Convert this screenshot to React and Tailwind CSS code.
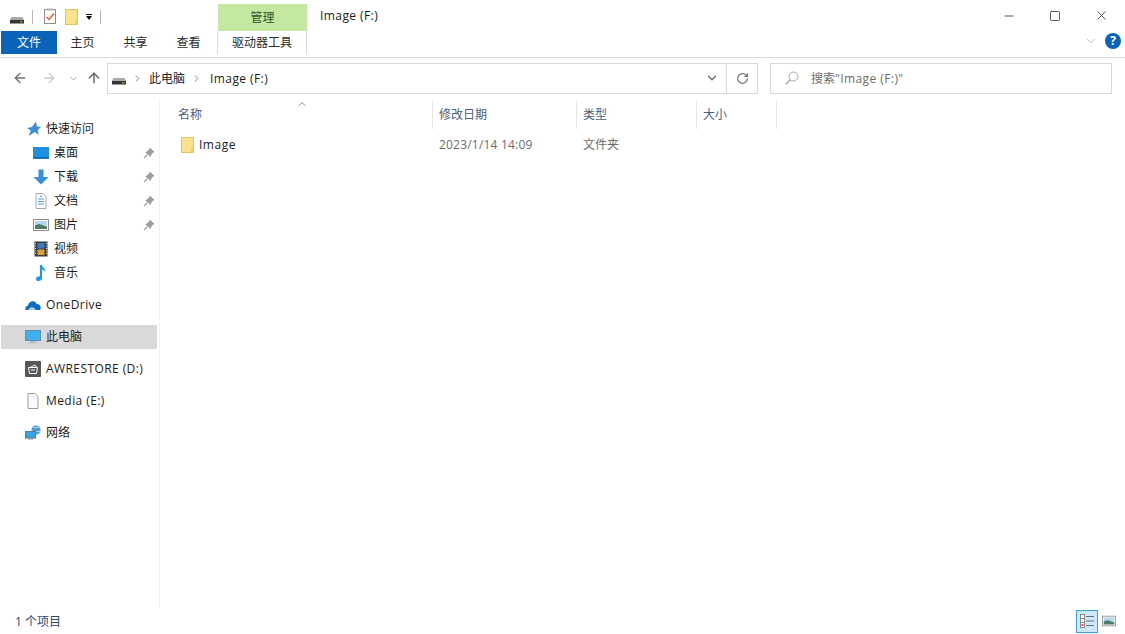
import { Minus, Square, X, ChevronDown, ChevronUp, ChevronRight, ArrowLeft, ArrowRight, ArrowUp, RotateCw } from 'lucide-react';

const font = 'font-["Open_Sans","Noto_Sans_CJK_SC",sans-serif]';

const DriveIcon = () => (
  <svg width="16" height="16" viewBox="0 0 16 16">
    <path d="M2.500 8h11l1.500 3H1z" fill="#a9a9a9" />
    <rect x="1" y="11" width="14" height="3.500" fill="#333" />
    <rect x="11" y="12" width="2.500" height="1.400" fill="#62b23a" />
  </svg>
);

const CheckDoc = () => (
  <svg width="14" height="17" viewBox="0 0 14 17">
    <rect x="1.500" y="1.500" width="11" height="14" fill="#fff" stroke="#8d8d8d" />
    <rect x="4" y="0.500" width="6" height="2" fill="#b0b0b0" />
    <path d="M3.500 9l2.500 2.500 5-6" fill="none" stroke="#e2622a" strokeWidth="1.500" />
  </svg>
);

const FolderIcon = ({ w = 13, h = 16 }) => (
  <svg width={w} height={h} viewBox="0 0 13 16">
    <rect x="0.500" y="0.500" width="12" height="15" fill="#fbe28f" stroke="#e5c35c" />
    <rect x="10" y="10" width="2.500" height="5.500" fill="#f0cf6c" />
  </svg>
);

const StarIcon = () => (
  <svg width="16" height="16" viewBox="0 0 16 16">
    <path d="M11 .5l1 5 4 .4-3.300 3 1 4.800-4-2.600L3.500 15l2.300-5.500L2 7l5-.9z" fill="#3a8fd6" />
  </svg>
);

const PinIcon = () => (
  <svg width="12" height="12" viewBox="0 0 12 12">
    <path d="M7 .5l4.500 4.500-1.300.6L8.400 7.400 8 10 6.600 9 4 6.800 2.200 5.600 4.400 4l1.900-1.800z" fill="#989fa7" />
    <path d="M4.500 7.500L1 11" stroke="#989fa7" strokeWidth="1.300" />
  </svg>
);

const DesktopIcon = () => (
  <svg width="16" height="16" viewBox="0 0 16 16">
    <rect x="0" y="2" width="16" height="12" fill="#1e8fe0" />
    <rect x="0.500" y="12" width="15" height="1.500" fill="#0f6cb8" />
  </svg>
);

const DownloadIcon = () => (
  <svg width="16" height="16" viewBox="0 0 16 16">
    <path d="M5.500 0.500h5v7.500H15.500L8 15.500.5 8h5z" fill="#3b8ede" />
  </svg>
);

const DocIcon = () => (
  <svg width="16" height="16" viewBox="0 0 16 16">
    <path d="M3 .5h7l3 3v12H3z" fill="#fff" stroke="#a9a9a9" />
    <path d="M5 6h6M5 8.500h6M5 11h6M7 3.500h2" stroke="#4d9bd6" />
  </svg>
);

const PictureIcon = () => (
  <svg width="16" height="16" viewBox="0 0 16 16">
    <rect x="0.500" y="2.500" width="15" height="11" fill="#fff" stroke="#8f8f8f" />
    <rect x="2" y="4" width="12" height="4.500" fill="#b6d6ea" />
    <path d="M2 8.500l4-1.500 8 2.500V12H2z" fill="#4c7c6a" />
  </svg>
);

const VideoIcon = () => (
  <svg width="16" height="16" viewBox="0 0 16 16">
    <rect x="1.500" y="0.500" width="13" height="15" fill="#3b3b3b" />
    <rect x="4.500" y="2" width="7" height="5.500" fill="#3f78c8" />
    <rect x="4.500" y="8.500" width="7" height="5.500" fill="#d8a23c" />
    <path d="M2.500 2v12M13.500 2v12" stroke="#ddd" strokeDasharray="1 1.500" />
  </svg>
);

const MusicIcon = () => (
  <svg width="16" height="16" viewBox="0 0 16 16">
    <path d="M7 0h2c.2 2.600 3.500 3.600 3.500 7-.7-1.400-2-2.200-3.500-2.600V13c0 1.800-1.800 3-3.500 3C4.200 16 3 15.200 3 13.900c0-1.700 2.200-3 4-2.500z" fill="#1d96e6" />
  </svg>
);

const CloudIcon = () => (
  <svg width="16" height="16" viewBox="0 0 16 16">
    <path d="M.5 13c-.8-2 .5-4 2.300-4.200C3.500 5.500 6 3.800 8.500 4.300c1.500.3 2.600 1.300 3.100 2.700 2-.3 4.100 1 4.100 3.500 0 1-.2 1.800-.6 2.500z" fill="#0f6cc0" />
    <path d="M3.500 13c.8-2.800 4-3.500 5.800-1.700L11 13z" fill="#fff" opacity="0.7" />
  </svg>
);

const PcIcon = () => (
  <svg width="16" height="16" viewBox="0 0 16 16">
    <rect x="0.500" y="1.500" width="15" height="10" fill="#3fb0ea" stroke="#5c8fb0" />
    <rect x="5.500" y="12" width="5" height="1.500" fill="#9bb4c4" />
    <rect x="3" y="13.500" width="10" height="1" fill="#b9c8d2" />
  </svg>
);

const RestoreIcon = () => (
  <svg width="16" height="16" viewBox="0 0 16 16">
    <rect x="0" y="0" width="16" height="16" rx="1" fill="#575757" />
    <path d="M3.500 6.500h9l-1 6h-7z M5 6.500l5-2.500 1.500 2.500M6 9h4" fill="none" stroke="#fff" />
  </svg>
);

const BlankDoc = () => (
  <svg width="16" height="16" viewBox="0 0 16 16">
    <path d="M3 .5h7l3 3v12H3z" fill="#fafafa" stroke="#9c9c9c" />
  </svg>
);

const NetworkIcon = () => (
  <svg width="16" height="16" viewBox="0 0 16 16">
    <circle cx="11" cy="5" r="4.500" fill="#4a9ad0" />
    <path d="M8 2c2 1 4 1 6 0M7 6c2 1 5 1 8 0" stroke="#bfe2f4" fill="none" />
    <rect x="0.500" y="6.500" width="10" height="6.500" fill="#35a4e0" stroke="#4f7f9f" />
    <rect x="3" y="13" width="5" height="1.500" fill="#8d9aa3" />
  </svg>
);

const SearchGlass = () => (
  <svg width="14" height="14" viewBox="0 0 14 14" fill="none" stroke="#a6a6a6">
    <circle cx="8.500" cy="5.500" r="4.500" />
    <path d="M5.300 8.700L.8 13.200" strokeWidth="1.400" />
  </svg>
);

const DetailsViewIcon = () => (
  <svg width="16" height="16" viewBox="0 0 16 16">
    <rect x="1.500" y="1.500" width="4" height="13" fill="#fff" stroke="#8a8a8a" />
    <path d="M2 5.500h3M2 9.500h3" stroke="#8a8a8a" />
    <rect x="2.500" y="11" width="2" height="2" fill="#d2554f" />
    <path d="M7 3.500h8M7 8h8M7 12.500h8" stroke="#6f6f6f" />
  </svg>
);

const NavItem = ({ icon, label, pinned, selected, indent, latin }) => (
  <div className={`flex h-6 items-center ${selected ? 'bg-[#d9d9d9]' : ''} ${indent ? 'pl-[32px]' : 'pl-[24px]'}`}>
    <span className="flex w-4 shrink-0 justify-center">{icon}</span>
    <span className={`ml-[5px] flex-1 whitespace-nowrap text-xs text-[#1c1c1c] ${latin ? 'tracking-[0.42px]' : ''}`}>{label}</span>
    {pinned && <span className="mr-[2px] flex"><PinIcon /></span>}
  </div>
);

const Header = ({ label, className }) => (
  <div className={`flex h-[28px] items-center border-r border-[#e5e5e5] pl-[6px] text-xs text-[#4c607a] ${className}`}>{label}</div>
);

export default function App() {
  return (
    <div className={`flex h-[634px] w-[1125px] flex-col overflow-hidden bg-white ${font}`}>
      {/* Title bar */}
      <div className="flex h-[31px] shrink-0 items-end">
        <div className="flex h-[31px] w-[218px] items-center pl-[9px] pt-[2px]">
          <DriveIcon />
          <span className="ml-[7px] h-[14px] w-px bg-[#b5b5b5]" />
          <span className="ml-[10px] flex"><CheckDoc /></span>
          <span className="ml-[8px] flex"><FolderIcon /></span>
          <span className="ml-[8px] flex flex-col items-center gap-[1px]">
            <span className="h-px w-[6px] bg-black" />
            <span className="h-0 w-0 border-x-[3.500px] border-t-[4px] border-x-transparent border-t-black" />
          </span>
          <span className="ml-[8px] h-[14px] w-px bg-[#b5b5b5]" />
        </div>
        <div className="flex h-[27px] w-[89px] items-center justify-center bg-[#c4e8a2] pt-px text-xs text-[#33502a]">管理</div>
        <div className="ml-[13px] h-[31px] flex-1 pt-[8px] text-xs tracking-[0.42px] text-[#1a1a1a]">Image (F:)</div>
        <div className="flex h-[31px] items-center pr-px">
          <span className="flex w-[46px] justify-center"><Minus size={14} strokeWidth={1.200} color="#111" /></span>
          <span className="flex w-[46px] justify-center"><Square size={12} strokeWidth={1.400} color="#111" /></span>
          <span className="flex w-[46px] justify-center"><X size={15} strokeWidth={1.100} color="#111" /></span>
        </div>
      </div>

      {/* Ribbon tabs */}
      <div className="flex h-[27px] shrink-0 items-start border-b border-[#dadada]">
        <div className="ml-px flex h-[23px] w-[56px] items-center justify-center bg-[#0a63b8] pt-px text-xs text-white">文件</div>
        <div className="-ml-px flex h-[23px] w-[53px] items-center justify-center pt-px text-xs text-[#2a2a2a]">主页</div>
        <div className="flex h-[23px] w-[53px] items-center justify-center pt-px text-xs text-[#2a2a2a]">共享</div>
        <div className="flex h-[23px] w-[53px] items-center justify-center pt-px text-xs text-[#2a2a2a]">查看</div>
        <div className="ml-[2px] flex h-[23px] w-[90px] items-center justify-center border-x border-[#dadada] pt-px text-xs text-[#2a2a2a]">驱动器工具</div>
        <div className="flex flex-1 items-center justify-end pr-[4px] pt-[2px]">
          <ChevronDown size={14} strokeWidth={1.500} color="#b4b4b4" />
          <span className="ml-[7px] flex h-4 w-4 items-center justify-center rounded-full bg-[#0a63b8] text-[12px] font-bold text-white">?</span>
        </div>
      </div>

      {/* Address row */}
      <div className="flex h-[40px] shrink-0 items-center">
        <div className="flex w-[107px] items-center pl-[12px]">
          <ArrowLeft size={16} strokeWidth={2} color="#707070" />
          <ArrowRight size={16} strokeWidth={2} color="#cdcdcd" className="ml-[13px]" />
          <ChevronDown size={11} strokeWidth={2} color="#a0a0a0" className="ml-[11px]" />
          <ArrowUp size={16} strokeWidth={2.200} color="#6a6a6a" className="ml-[7px]" />
        </div>
        <div className="flex h-[31px] w-[651px] items-center border border-[#d9d9d9]">
          <span className="ml-[3px] flex"><DriveIcon /></span>
          <ChevronRight size={11} strokeWidth={2} color="#808080" className="ml-[5px]" />
          <span className="ml-[6px] pt-px text-xs text-[#1c1c1c]">此电脑</span>
          <ChevronRight size={11} strokeWidth={2} color="#808080" className="ml-[6px]" />
          <span className="ml-[8px] pt-px text-xs tracking-[0.42px] text-[#1c1c1c]">Image (F:)</span>
          <span className="flex-1" />
          <ChevronDown size={14} strokeWidth={2.400} color="#6d6d6d" className="mr-[7px]" />
          <span className="flex h-full w-[31px] items-center justify-center border-l border-[#d9d9d9]">
            <RotateCw size={13} strokeWidth={2.200} color="#6d6d6d" />
          </span>
        </div>
        <div className="ml-[12px] flex h-[31px] w-[342px] items-center border border-[#d9d9d9] pl-[14px] text-xs text-[#6d6d6d]">
          <SearchGlass />
          <span className="ml-[12px] pt-px">搜索<span className="tracking-[0.42px]">"Image (F:)"</span></span>
        </div>
      </div>

      {/* Main area */}
      <div className="flex min-h-0 flex-1">
        <nav className="flex w-[160px] shrink-0 flex-col border-r border-[#f2f2f2] pt-[19px]">
          <div className="mr-[2px] ml-px flex flex-col">
            <NavItem icon={<StarIcon />} label="快速访问" />
            <NavItem indent icon={<DesktopIcon />} label="桌面" pinned />
            <NavItem indent icon={<DownloadIcon />} label="下载" pinned />
            <NavItem indent icon={<DocIcon />} label="文档" pinned />
            <NavItem indent icon={<PictureIcon />} label="图片" pinned />
            <NavItem indent icon={<VideoIcon />} label="视频" />
            <NavItem indent icon={<MusicIcon />} label="音乐" />
            <div className="mt-2"><NavItem latin icon={<CloudIcon />} label="OneDrive" /></div>
            <div className="mt-2"><NavItem selected icon={<PcIcon />} label="此电脑" /></div>
            <div className="mt-2"><NavItem latin icon={<RestoreIcon />} label="AWRESTORE (D:)" /></div>
            <div className="mt-2"><NavItem latin icon={<BlankDoc />} label="Media (E:)" /></div>
            <div className="mt-2"><NavItem icon={<NetworkIcon />} label="网络" /></div>
          </div>
        </nav>

        <main className="flex-1 pl-[12px] pt-[3px]">
          <div className="relative flex">
            <ChevronUp size={12} strokeWidth={2} color="#8a8a8a" className="absolute left-[124px] -top-[3px]" />
            <Header label="名称" className="w-[261px]" />
            <Header label="修改日期" className="w-[144px]" />
            <Header label="类型" className="w-[120px]" />
            <Header label="大小" className="w-[80px]" />
          </div>
          <div className="mt-[4px] flex h-[24px] items-center text-xs">
            <div className="flex w-[261px] items-center pl-[9px] text-[#1c1c1c]">
              <FolderIcon />
              <span className="ml-[5px] tracking-[0.5px]">Image</span>
            </div>
            <div className="w-[144px] pl-[6px] tracking-[0.2px] text-[#6d6d6d]">2023/1/14 14:09</div>
            <div className="w-[120px] pl-[6px] text-[#6d6d6d]">文件夹</div>
          </div>
        </main>
      </div>

      {/* Status bar */}
      <div className="flex h-[26px] shrink-0 items-center pl-[15px] text-xs text-[#2e4a6b]">
        <span className="flex-1 pt-[2px]">1 个项目</span>
        <span className="flex h-[23px] w-[22px] items-center justify-center border border-[#39a3e0] bg-[#cce8ff]"><DetailsViewIcon /></span>
        <span className="ml-[4px] mr-[9px] flex w-[14px] justify-center"><PictureIcon /></span>
      </div>
    </div>
  );
}
